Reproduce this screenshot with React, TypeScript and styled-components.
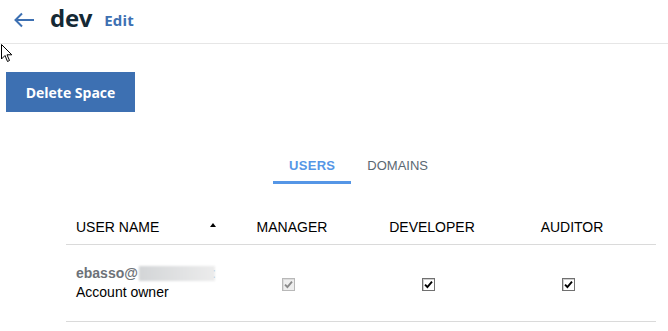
import styled, { createGlobalStyle } from "styled-components";

const GlobalStyle = createGlobalStyle`
  html, body {
    margin: 0;
    padding: 0;
    background: #ffffff;
    font-family: "Liberation Sans", Arial, sans-serif;
  }
`;

const Page = styled.div`
  position: relative;
  width: 668px;
  height: 331px;
  overflow: hidden;
`;

const Header = styled.header`
  display: flex;
  align-items: center;
  height: 43px;
  padding-left: 13px;
  border-bottom: 1px solid #e6e6e6;
  box-sizing: content-box;
`;

const BackButton = styled.button`
  display: flex;
  align-items: center;
  justify-content: center;
  width: 22px;
  height: 22px;
  padding: 0;
  margin-right: 15px;
  margin-top: -3px;
  border: none;
  background: none;
  cursor: pointer;
`;

const SpaceName = styled.h1`
  margin: 0;
  margin-top: -8px;
  font-family: "Open Sans", "Liberation Sans", sans-serif;
  font-size: 24px;
  font-weight: 700;
  letter-spacing: -0.3px;
  color: #152935;
`;

const EditLink = styled.a`
  margin-left: 12px;
  margin-top: -3px;
  font-family: "Open Sans", "Liberation Sans", sans-serif;
  font-size: 15px;
  font-weight: 700;
  letter-spacing: 0.2px;
  color: #3d70b2;
  text-decoration: none;
`;

const Main = styled.main`
  padding-top: 28px;
`;

const DangerButton = styled.button`
  display: block;
  width: 129px;
  height: 40px;
  margin-left: 6px;
  border: none;
  background: #3d70b2;
  color: #ffffff;
  font-family: "Open Sans", "Liberation Sans", sans-serif;
  font-size: 14px;
  font-weight: 700;
  cursor: pointer;
`;

const Tabs = styled.nav`
  display: flex;
  margin: 37px 0 0 273px;
`;

const Tab = styled.a<{ $active?: boolean }>`
  padding: 9px 16px 7px;
  line-height: 16px;
  font-size: 13px;
  font-weight: ${(p) => (p.$active ? 700 : 400)};
  letter-spacing: ${(p) => (p.$active ? "0.3px" : "0")};
  color: ${(p) => (p.$active ? "#5596e6" : "#5a6872")};
  border-bottom: 3px solid ${(p) => (p.$active ? "#5596e6" : "transparent")};
  cursor: pointer;
`;

const Table = styled.div`
  margin: 24px 12px 0 66px;
`;

const Row = styled.div<{ $head?: boolean }>`
  display: grid;
  grid-template-columns: 156px 140px 140px 140px 1fr;
  align-items: center;
  height: ${(p) => (p.$head ? "36px" : "76px")};
  border-bottom: 1px solid #dadada;
  font-size: 14px;
  color: #000000;
`;

const HeadCell = styled.div<{ $center?: boolean }>`
  display: flex;
  align-items: center;
  justify-content: ${(p) => (p.$center ? "center" : "space-between")};
  padding: ${(p) => (p.$center ? "0" : "0 6px 0 10px")};
  padding-top: 1px;
`;

const SortArrow = styled.span`
  width: 0;
  height: 0;
  margin-top: -4px;
  border-left: 3.5px solid transparent;
  border-right: 3.5px solid transparent;
  border-bottom: 4px solid #000000;
`;

const UserCell = styled.div`
  padding-left: 10px;
  line-height: 19px;
  white-space: nowrap;
`;

const Email = styled.div`
  display: flex;
  align-items: center;
  font-weight: 700;
  color: #6d7278;
`;

const Redacted = styled.span`
  display: inline-block;
  width: 76px;
  height: 15px;
  margin-left: 1px;
  background: linear-gradient(90deg, #d3d5d7, #e2e3e4 60%, #ececec);
  filter: blur(1px);
`;

const Colon = styled.span`
  color: #6f8fb8;
  font-weight: 400;
  margin-left: -3px;
`;

const Role = styled.div`
  color: #000000;
`;

const CheckCell = styled.div`
  display: flex;
  justify-content: center;
  padding-right: 7px;
  padding-top: 2px;
`;

const CheckBox = styled.span<{ $disabled?: boolean }>`
  display: flex;
  align-items: center;
  justify-content: center;
  width: 11px;
  height: 11px;
  border: 1px solid ${(p) => (p.$disabled ? "#b8b8b8" : "#707070")};
  background: ${(p) => (p.$disabled ? "#eeeeee" : "#ffffff")};
  box-shadow: inset 1px 1px 0 ${(p) => (p.$disabled ? "#dcdcdc" : "#cfcfcf")};
`;

const Cursor = styled.svg`
  position: absolute;
  left: 1px;
  top: 44px;
`;

function Check({ disabled }: { disabled?: boolean }) {
  return (
    <CheckBox $disabled={disabled}>
      <svg width="9" height="9" viewBox="0 0 9 9">
        <path
          d="M1 4.6 L3.4 7 L8 1.6"
          fill="none"
          stroke={disabled ? "#8a8a8a" : "#000000"}
          strokeWidth="1.9"
        />
      </svg>
    </CheckBox>
  );
}

export default function App() {
  return (
    <>
      <GlobalStyle />
      <Page>
        <Header>
          <BackButton aria-label="Back">
            <svg width="22" height="16" viewBox="0 0 22 16">
              <path
                d="M21 8 H2.5 M9 1.5 L2.5 8 L9 14.5"
                fill="none"
                stroke="#3d70b2"
                strokeWidth="2"
              />
            </svg>
          </BackButton>
          <SpaceName>dev</SpaceName>
          <EditLink>Edit</EditLink>
        </Header>
        <Main>
          <DangerButton>Delete Space</DangerButton>
          <Tabs>
            <Tab $active>USERS</Tab>
            <Tab>DOMAINS</Tab>
          </Tabs>
          <Table>
            <Row $head>
              <HeadCell>
                USER NAME
                <SortArrow />
              </HeadCell>
              <HeadCell $center>MANAGER</HeadCell>
              <HeadCell $center>DEVELOPER</HeadCell>
              <HeadCell $center>AUDITOR</HeadCell>
              <div />
            </Row>
            <Row>
              <UserCell>
                <Email>
                  ebasso@
                  <Redacted />
                  <Colon>:</Colon>
                </Email>
                <Role>Account owner</Role>
              </UserCell>
              <CheckCell>
                <Check disabled />
              </CheckCell>
              <CheckCell>
                <Check />
              </CheckCell>
              <CheckCell>
                <Check />
              </CheckCell>
              <div />
            </Row>
          </Table>
        </Main>
        <Cursor width="12" height="20" viewBox="0 0 12 20">
          <path
            d="M0.5 0.5 V15 L4 11.5 L6.5 17.5 L8.5 16.5 L6 10.8 H10.8 Z"
            fill="#ffffff"
            stroke="#000000"
            strokeWidth="1"
          />
        </Cursor>
      </Page>
    </>
  );
}
